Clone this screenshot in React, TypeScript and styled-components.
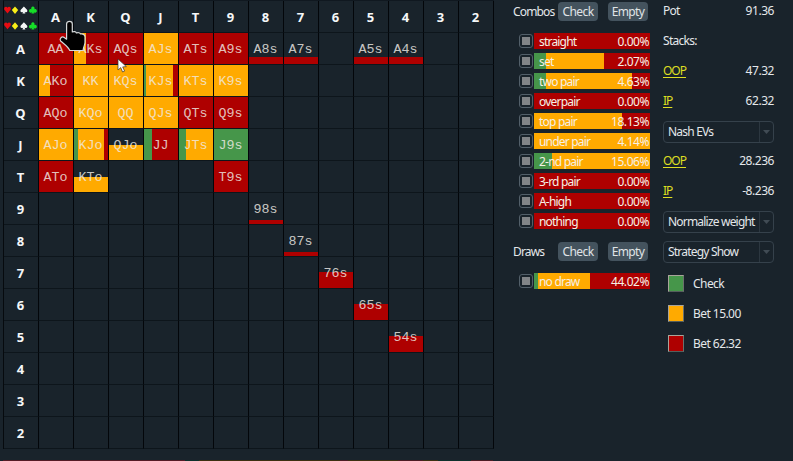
import React from 'react';
import styled, { createGlobalStyle } from 'styled-components';

const RED = '#ae0000';
const ORANGE = '#ffaa00';
const GREEN = '#46964a';
const BG = '#19232b';

const Global = createGlobalStyle`
  * { box-sizing: border-box; }
  body { margin: 0; background: ${BG}; overflow: hidden; }
`;

const Screen = styled.div`
  position: relative;
  width: 793px;
  height: 461px;
  display: flex;
  background: ${BG};
  color: #e4e7ea;
  font: 12px/16px "Noto Sans", "Open Sans", sans-serif;
  letter-spacing: -0.7px;
  overflow: hidden;
`;

const RangeColumn = styled.section`
  width: 513px;
  padding-left: 3px;
  display: flex;
  flex-direction: column;
`;

const Grid = styled.div`
  width: 491px;
  display: grid;
  grid-template-columns: repeat(14, 35px);
  grid-template-rows: repeat(14, 32px);
  border-left: 1px solid #060a0e;
  border-top: 1px solid #101820;
`;

const Cell = styled.div<{ $fill?: string }>`
  display: flex;
  align-items: center;
  justify-content: center;
  padding: 3px 1px 0 0;
  border-right: 1px solid #03060a;
  border-bottom: 1px solid #0d151b;
  background: ${p => p.$fill || 'transparent'};
  background-clip: padding-box;
  background-origin: padding-box;
  color: rgba(239, 235, 229, 0.83);
  font: 13.33px/16px "Courier New", "Liberation Mono", monospace;
  letter-spacing: 0;
`;

const HeaderCell = styled(Cell)`
  color: #f5f7f8;
  padding: 1px 1px 0 0;
  font: bold 13px/16px "Noto Sans", sans-serif;
`;

const SuitCell = styled(Cell)`
  padding: 0;
  justify-content: flex-start;
  overflow: hidden;
`;

const Timeline = styled.div`
  width: 490px;
  height: 1px;
  margin-top: 11px;
  background: linear-gradient(90deg, #551c26 0 182px, #0d302b 182px 196px, #3c3011 196px 337px, #4c1c24 337px 345px, #3c3011 345px 395px, #4c1c24 395px 420px, #3c3011 420px 435px, #0d302b 435px 468px, #4c1c24 468px);
`;

const CategoryColumn = styled.section`
  width: 150px;
  padding-top: 2px;
`;

const SectionHead = styled.header`
  display: flex;
  height: 19px;
  align-items: center;
`;

const SectionTitle = styled.span`
  width: 45px;
  letter-spacing: -0.85px;
`;

const Button = styled.button`
  width: 40px;
  height: 19px;
  margin-right: 10px;
  padding: 0;
  border: 0;
  border-radius: 4px;
  background: #44535e;
  color: #e0e4e7;
  font: inherit;
  letter-spacing: -0.6px;
`;

const CategoryList = styled.div<{ $last?: boolean }>`
  display: grid;
  gap: 4px;
  padding: 12px 0 ${p => (p.$last ? 0 : '13px')} 6px;
`;

const CategoryRow = styled.div`
  display: flex;
  height: 16px;
  align-items: center;
  gap: 1px;
`;

const Checkbox = styled.span`
  width: 14px;
  height: 14px;
  border: 1px solid #53606a;
  border-radius: 3px;
  display: grid;
  place-items: center;
  &::after {
    content: '';
    width: 8px;
    height: 8px;
    background: #828588;
  }
`;

const Bar = styled.div<{ $fill: string }>`
  width: 116px;
  height: 16px;
  padding: 1px 1px 0 5px;
  display: flex;
  align-items: center;
  justify-content: space-between;
  background: ${p => p.$fill};
  color: #f6f0e6;
  letter-spacing: -0.8px;
`;

const InfoColumn = styled.section`
  width: 111px;
  padding-top: 2px;
  display: grid;
  align-content: start;
  grid-template-columns: 111px;
  grid-auto-rows: 18px;
  row-gap: 12px;
`;

const InfoRow = styled.div`
  display: flex;
  align-items: center;
  justify-content: space-between;
`;

const Value = styled.span`
  letter-spacing: -0.45px;
`;

const Player = styled.span`
  color: #dede22;
  letter-spacing: -1px;
  text-decoration: underline;
  text-underline-offset: 2px;
`;

const Select = styled.div`
  height: 22px;
  margin-top: -1px;
  display: flex;
  align-items: center;
  justify-content: space-between;
  border: 1px solid #35414b;
  border-radius: 4px;
  padding-left: 4px;
  white-space: nowrap;
  letter-spacing: -0.8px;
`;

const Arrow = styled.span`
  height: 20px;
  width: 14px;
  flex: none;
  border-left: 1px solid #2c3740;
  display: grid;
  place-items: center;
`;

const LegendRow = styled.div`
  display: flex;
  align-items: center;
  gap: 9px;
  padding: 5px 0 0 5px;
  letter-spacing: -0.55px;
`;

const Swatch = styled.span<{ $color: string }>`
  width: 16px;
  height: 17px;
  background: ${p => p.$color};
  border: 1px solid;
  border-color: #a8a49a #6b706c #555f5d #a8a49a;
`;

const HandPointer = styled.svg`
  position: absolute;
  left: 58px;
  top: 19px;
`;

const ArrowPointer = styled.svg`
  position: absolute;
  left: 117px;
  top: 58px;
`;

const across = (green: number, orange: number) =>
  `linear-gradient(90deg, ${GREEN} ${green}%, ${ORANGE} ${green}% ${orange}%, ${RED} ${orange}%)`;
const fromBottom = (color: string, px: number) =>
  `linear-gradient(0deg, ${color} ${px}px, transparent ${px}px)`;

const ranks = 'AKQJT98765432'.split('');

const hands: Record<string, string> = {
  AA: RED, AKs: across(0, 36), AQs: RED, AJs: ORANGE, ATs: RED, A9s: RED,
  A8s: fromBottom(RED, 7), A7s: fromBottom(RED, 7), A5s: fromBottom(RED, 7), A4s: fromBottom(RED, 7),
  AKo: across(0, 32), KK: ORANGE, KQs: ORANGE, KJs: across(7, 84), KTs: ORANGE, K9s: ORANGE,
  AQo: RED, KQo: ORANGE, QQ: ORANGE, QJs: ORANGE, QTs: RED, Q9s: RED,
  AJo: ORANGE, KJo: across(12, 89), QJo: fromBottom(ORANGE, 15), JJ: across(24, 24),
  JTs: across(22, 100), J9s: GREEN,
  ATo: RED, KTo: fromBottom(ORANGE, 15), T9s: RED,
  '98s': fromBottom(RED, 4), '87s': fromBottom(RED, 4),
  '76s': fromBottom(RED, 16), '65s': fromBottom(RED, 16), '54s': fromBottom(RED, 16),
};

const combos: [string, string, number, number][] = [
  ['straight', '0.00%', 0, 0],
  ['set', '2.07%', 10.5, 60.5],
  ['two pair', '4.63%', 10.5, 84.5],
  ['overpair', '0.00%', 0, 0],
  ['top pair', '18.13%', 0, 76],
  ['under pair', '4.14%', 0, 100],
  ['2-nd pair', '15.06%', 15.5, 100],
  ['3-rd pair', '0.00%', 0, 0],
  ['A-high', '0.00%', 0, 0],
  ['nothing', '0.00%', 0, 0],
];

function handName(row: number, col: number) {
  if (row === col) return ranks[row] + ranks[row];
  return row < col ? `${ranks[row]}${ranks[col]}s` : `${ranks[col]}${ranks[row]}o`;
}

const heart = 'M3.5 7 .4 3.4C-.3 2 .5.3 1.9.3c.7 0 1.3.4 1.6 1 .3-.6.9-1 1.6-1 1.4 0 2.2 1.7 1.5 3.1z';
const diamond = 'M3.5 0 6.7 3.7 3.5 7.5.3 3.7z';
const spade = 'M3.5 0 6.6 3.3c.9 1.3.1 2.6-1 2.6-.6 0-1.1-.2-1.5-.6L5 7.2H2l.9-1.9c-.4.4-.9.6-1.5.6-1.1 0-1.9-1.3-1-2.6z';
const club = 'M3.5 0a1.8 1.8 0 0 1 1.4 2.8A1.8 1.8 0 1 1 4.1 5.3L5 7.2H2l.9-1.9A1.8 1.8 0 1 1 2.1 2.8 1.8 1.8 0 0 1 3.5 0z';

function Suits() {
  return (
    <svg width="34" height="31" viewBox="0 0 34 31">
      {[5.4, 21.2].map(y => (
        <g key={y}>
          <path d={heart} fill="#e60c12" transform={`translate(0 ${y})`} />
          <path d={diamond} fill="#f8ee18" transform={`translate(7.5 ${y})`} />
          <path d={spade} fill="#f5f7f7" transform={`translate(16.4 ${y})`} />
          <path d={club} fill="#16df28" transform={`translate(25.4 ${y})`} />
        </g>
      ))}
    </svg>
  );
}

function Categories({ items, last }: { items: typeof combos; last?: boolean }) {
  return (
    <CategoryList $last={last}>
      {items.map(([name, percent, green, orange]) => (
        <CategoryRow key={name}>
          <Checkbox />
          <Bar $fill={across(green, orange)}><span>{name}</span><Value>{percent}</Value></Bar>
        </CategoryRow>
      ))}
    </CategoryList>
  );
}

function Heading({ title }: { title: string }) {
  return (
    <SectionHead>
      <SectionTitle>{title}</SectionTitle>
      <Button>Check</Button>
      <Button>Empty</Button>
    </SectionHead>
  );
}

function Dropdown({ label }: { label: string }) {
  return (
    <Select>
      <span>{label}</span>
      <Arrow><svg width="7" height="4"><path d="M0 0h7L3.5 4z" fill="#404b54" /></svg></Arrow>
    </Select>
  );
}

export default function App() {
  return (
    <>
      <Global />
      <Screen>
        <RangeColumn>
          <Grid>
            <SuitCell><Suits /></SuitCell>
            {ranks.map(r => <HeaderCell key={r}>{r}</HeaderCell>)}
            {ranks.map((r, row) => (
              <React.Fragment key={r}>
                <HeaderCell>{r}</HeaderCell>
                {ranks.map((c, col) => {
                  const name = handName(row, col);
                  return <Cell key={c} $fill={hands[name]}>{hands[name] ? name : null}</Cell>;
                })}
              </React.Fragment>
            ))}
          </Grid>
          <Timeline />
        </RangeColumn>

        <CategoryColumn>
          <Heading title="Combos" />
          <Categories items={combos} />
          <Heading title="Draws" />
          <Categories items={[['no draw', '44.02%', 3.5, 48]]} last />
        </CategoryColumn>

        <InfoColumn>
          <InfoRow><span>Pot</span><Value>91.36</Value></InfoRow>
          <InfoRow><span>Stacks:</span></InfoRow>
          <InfoRow><Player>OOP</Player><Value>47.32</Value></InfoRow>
          <InfoRow><Player>IP</Player><Value>62.32</Value></InfoRow>
          <Dropdown label="Nash EVs" />
          <InfoRow><Player>OOP</Player><Value>28.236</Value></InfoRow>
          <InfoRow><Player>IP</Player><Value>-8.236</Value></InfoRow>
          <Dropdown label="Normalize weight" />
          <Dropdown label="Strategy Show" />
          <LegendRow><Swatch $color={GREEN} />Check</LegendRow>
          <LegendRow><Swatch $color={ORANGE} />Bet 15.00</LegendRow>
          <LegendRow><Swatch $color={RED} />Bet 62.32</LegendRow>
        </InfoColumn>

        <HandPointer width="30" height="34" viewBox="0 0 30 34">
          <path
            d="M8.6 5C8.6 1.4 14.3 1.4 14.3 5V13C16 12 18 12.8 18.4 14 20 13.2 22 13.8 22.5 15 24.6 14.4 27 15.6 27 18V23.5C27 26 25.5 27.5 25 31.5H11.8C10 27.5 6 25 2.6 22 1 19.5 4 17 6.2 18.5L8.6 20.2Z"
            fill="#000" stroke="#d5d8d9" strokeWidth="1.2" strokeLinejoin="round"
          />
        </HandPointer>
        <ArrowPointer width="11" height="16" viewBox="0 0 11 16">
          <path d="M1 1v11l2.7-2.4L5.6 14l2-.9-1.9-4.2 3.7-.3z" fill="#fff" stroke="#38322b" strokeWidth=".7" />
        </ArrowPointer>
      </Screen>
    </>
  );
}
